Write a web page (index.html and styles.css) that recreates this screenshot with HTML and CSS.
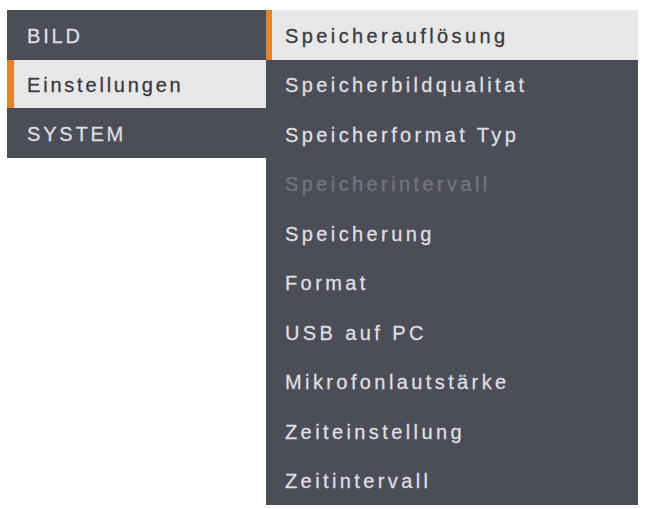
FILE: index.html
```html
<!DOCTYPE html>
<html lang="de">
<head>
<meta charset="utf-8">
<title>Menü</title>
<link rel="stylesheet" href="styles.css">
</head>
<body>
<div class="menu">
  <ul class="panel main">
    <li class="item">BILD</li>
    <li class="item active">Einstellungen</li>
    <li class="item">SYSTEM</li>
  </ul>
  <ul class="panel sub">
    <li class="item active">Speicherauflösung</li>
    <li class="item">Speicherbildqualitat</li>
    <li class="item">Speicherformat Typ</li>
    <li class="item disabled">Speicherintervall</li>
    <li class="item">Speicherung</li>
    <li class="item">Format</li>
    <li class="item">USB auf PC</li>
    <li class="item">Mikrofonlautstärke</li>
    <li class="item">Zeiteinstellung</li>
    <li class="item">Zeitintervall</li>
  </ul>
</div>
</body>
</html>
```
FILE: styles.css
```css
html, body {
  margin: 0;
  padding: 0;
  background: #ffffff;
}
body {
  font-family: "Liberation Sans", Arial, sans-serif;
}
.menu {
  display: flex;
  align-items: flex-start;
  padding: 10px 0 0 7px;
}
.panel {
  list-style: none;
  margin: 0;
  padding: 0;
  background: #4b4e56;
}
.main {
  width: 259px;
}
.sub {
  width: 372px;
}
.item {
  display: flex;
  align-items: center;
  height: 49.5px;
  box-sizing: border-box;
  padding-top: 3px;
  font-size: 20px;
  letter-spacing: 3.4px;
  color: #dfdfe1;
  -webkit-text-stroke: 0.3px currentColor;
  border-left: 6px solid transparent;
}
.main .item {
  padding-left: 14px;
  letter-spacing: 2.8px;
}
.main .item:first-child {
  height: 50px;
}
.sub .item {
  padding-left: 13px;
}
.item.active {
  background: #e8e8e8;
  color: #3a3b40;
  border-left-color: #e5822b;
}
.main .item.active {
  border-left-width: 7px;
  padding-left: 13px;
  height: 48px;
}
.item.disabled {
  color: #73767e;
}
```
